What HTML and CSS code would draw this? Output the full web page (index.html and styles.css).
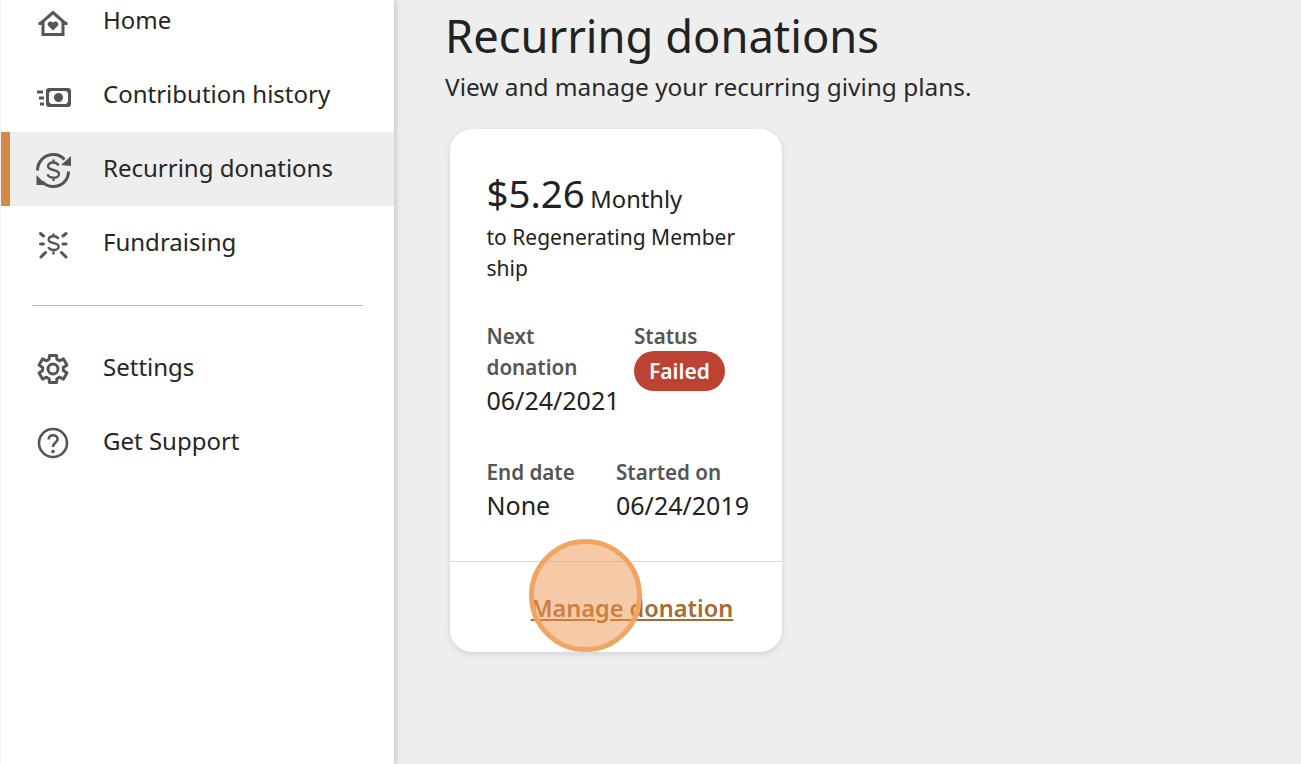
FILE: index.html
```html
<!DOCTYPE html>
<html lang="en">
<head>
<meta charset="utf-8">
<title>Recurring donations</title>
<link rel="stylesheet" href="styles.css">
</head>
<body>
<div class="app">
  <aside class="sidebar">
    <nav class="nav">
      <a class="nav-item"><svg class="icon" viewBox="0 0 36 36"><path d="M3.500 20.500h2L18 9.500l12.500 11h2" class="st"/><path d="M8 18v13.500h20V18" class="st"/><path d="M18 27.500l-4.800-4.800c-2-2.800 2.300-6 4.800-3 2.500-3 6.800.2 4.800 3z" class="fl"/></svg><span>Home</span></a>
      <a class="nav-item"><svg class="icon" viewBox="0 0 36 36"><rect x="12.500" y="12.500" width="22" height="16" rx="1.500" class="st"/><circle cx="23.500" cy="20.500" r="4.500" class="fl"/><path d="M13 13h4l-4 4zM34 13h-4l4 4zM13 28h4l-4-4zM34 28h-4l4-4z" class="fl"/><path d="M2 15h6M4 21h5M5 27h4" class="st"/></svg><span>Contribution history</span></a>
      <a class="nav-item active"><svg class="icon" viewBox="0 0 36 36"><path d="M2.500 19.500C2.500 10.500 9.500 3.500 18.500 3.500c4.500 0 8 1.700 11 5M33.500 20.500c0 9-7 15-15.500 15-4.500 0-8-1.700-11-5" class="st"/><path d="M36 5v10l-10-1zM1.500 24v10h10z" class="fl"/><path d="M23.500 14.500c-.8-2-2.800-3-5.500-3-3 0-5 1.500-5 3.800 0 4.800 11 2.600 11 7.600 0 2.300-2.400 3.800-5.500 3.800-3 0-5.200-1.100-6-3.300M18.500 8.500v3M18.500 26.500v3.500" class="st thin"/></svg><span>Recurring donations</span></a>
      <a class="nav-item"><svg class="icon" viewBox="0 0 36 36"><path d="M23.500 14c-.8-1.800-2.700-2.700-5-2.700-2.800 0-4.800 1.300-4.800 3.500 0 4.400 10 2.300 10 6.700 0 2.100-2.200 3.500-5 3.500-2.500 0-4.600-1-5.400-2.900M18.500 8.500v3M18.500 26.500v3" class="st thin"/><path d="M5.500 8.500l3 2.500M31 8.500l-3 2.500M6 32l4.500-4.500M31 32l-4.500-4.500M5.500 19h3M28 19h3" class="st round"/></svg><span>Fundraising</span></a>
    </nav>
    <hr class="rule">
    <nav class="nav lower">
      <a class="nav-item"><svg class="icon" viewBox="0 0 36 36"><g transform="translate(18 20)"><path class="st gear" d="M-3.900-9.700-3.500-13.600 3.500-13.600 3.900-9.700 6.450-8.230 10.460-10.080 13.960-4.020 10.350-1.470 10.350 1.470 13.960 4.020 10.460 10.080 6.450 8.230 3.900 9.700 3.500 13.600-3.500 13.600-3.900 9.700-6.450 8.230-10.460 10.080-13.960 4.020-10.350 1.470-10.350-1.470-13.960-4.020-10.460-10.080-6.450-8.230z"/><circle class="st gear" cx="0" cy="0" r="5"/></g></svg><span>Settings</span></a>
      <a class="nav-item"><svg class="icon" viewBox="0 0 36 36"><circle cx="18" cy="20" r="14" class="st ring"/><path d="M13.600 16.500c0-5.700 9-5.700 9-.3 0 3.500-4.600 3.400-4.600 7.800" class="st ring"/><circle cx="18" cy="28.500" r="1.800" class="fl"/></svg><span>Get Support</span></a>
    </nav>
  </aside>
  <main class="main">
    <h1 class="title">Recurring donations</h1>
    <p class="subtitle">View and manage your recurring giving plans.</p>
    <section class="card">
      <div class="card-body">
        <div class="amount"><span class="sum">$5.26</span> <span class="freq">Monthly</span></div>
        <div class="to">to Regenerating Member<br>ship</div>
        <div class="row row-a">
          <div class="cell next"><div class="label">Next<br>donation</div><div class="value">06/24/2021</div></div>
          <div class="cell"><div class="label">Status</div><span class="badge">Failed</span></div>
        </div>
        <div class="row row-b">
          <div class="cell end"><div class="label">End date</div><div class="value">None</div></div>
          <div class="cell"><div class="label">Started on</div><div class="value">06/24/2019</div></div>
        </div>
      </div>
      <div class="card-foot"><a class="manage">Manage donation</a></div>
    </section>
  </main>
</div>
<div class="tap"></div>
</body>
</html>
```
FILE: styles.css
```css
* { box-sizing: border-box; }
html, body { margin: 0; height: 100%; overflow: hidden; }
body { font-family: "Noto Sans", sans-serif; color: #222; background: #eeeeee; }
.app { display: flex; height: 764px; }
.sidebar { width: 394px; flex: none; background: #fff; border-left: 1px solid #eef1f6; box-shadow: 3px 0 4px rgba(0,0,0,.12); overflow: hidden; }
.nav { display: flex; flex-direction: column; }
.nav:first-child { margin-top: -16px; }
.nav-item { display: flex; align-items: center; height: 74px; padding-left: 25px; font-size: 24px; color: #262626; border-left: 9px solid transparent; }
.nav-item span { margin-left: 32px; margin-bottom: 4px; }
.lower .nav-item span { margin-bottom: 2px; }
.nav-item.active { background: #eeeeee; border-left-color: #d38a45; }
.icon { width: 36px; height: 36px; flex: none; overflow: visible; }
.st { fill: none; stroke: #555; stroke-width: 3; }
.st.thin { stroke-width: 2.400; }
.st.round { stroke-width: 3; stroke-linecap: round; }
.st.gear { stroke-width: 3; stroke-linejoin: round; }
.st.ring { stroke-width: 2.600; }
.fl { fill: #555; }
.rule { margin: 25px 31px 24px 31px; border: 0; border-top: 1px solid #bbb; }
.main { flex: 1; padding: 0 0 0 51px; }
.title { margin: 7px 0 0; font-size: 45.300px; font-weight: 400; line-height: 58px; color: #222; }
.subtitle { margin: 6px 0 0; font-size: 24.400px; line-height: 32px; color: #2a2a2a; }
.card { width: 332px; height: 523px; margin: 26px 0 0 5px; background: #fff; border-radius: 22px; box-shadow: 0 2px 6px rgba(0,0,0,.12); display: flex; flex-direction: column; }
.card-body { height: 433px; padding: 42px 20px 0 36.500px; border-bottom: 1px solid #ddd; }
.sum { font-size: 38.400px; line-height: 44px; }
.freq { font-size: 23.700px; margin-left: 1.500px; }
.to { font-size: 21px; line-height: 31px; margin-top: 7px; }
.row { display: flex; }
.row-a { margin-top: 37px; }
.row-b { margin-top: 39px; }
.cell.next { width: 147.500px; }
.cell.end { width: 129.500px; }
.label { font-size: 20.600px; font-weight: 600; color: #555; line-height: 31px; }
.value { font-size: 25px; line-height: 36px; margin-top: -1px; color: #222; }
.badge { display: inline-block; margin-top: -1px; padding: 0 15px; height: 40px; line-height: 40px; border-radius: 20px; background: #bc4334; color: #fff; font-size: 21px; font-weight: 600; }
.card-foot { flex: 1; display: flex; justify-content: center; padding: 29px 0 0 32px; }
.manage { font-size: 23.500px; line-height: 34px; font-weight: 600; color: #a66a35; text-decoration: underline; height: 34px; }
.tap { position: absolute; left: 529px; top: 539px; width: 113px; height: 113px; border-radius: 50%; border: 5px solid #f2a561; background: rgba(240,150,80,.5); }
```
